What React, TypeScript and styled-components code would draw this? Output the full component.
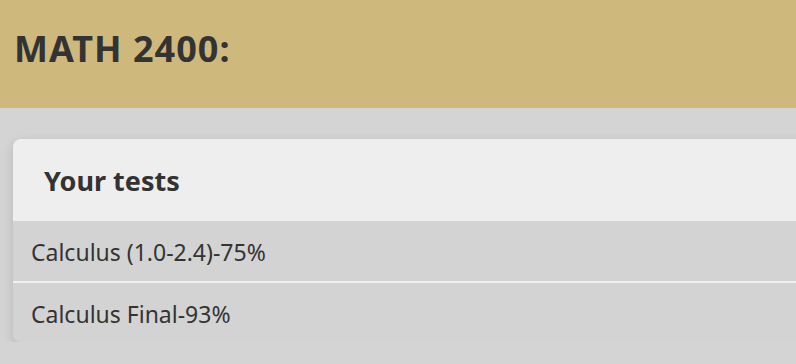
import React from "react"
import styled, { createGlobalStyle } from "styled-components"

const GlobalStyle = createGlobalStyle`
  html, body {
    margin: 0;
    padding: 0;
    background: #d4d4d4;
    overflow: hidden;
    font-family: "Noto Sans", "Open Sans", sans-serif;
    color: #333333;
  }
`

const tests = ["Calculus (1.0-2.4)-75%", "Calculus Final-93%"]

const App = () => {
  return (
    <>
      <GlobalStyle />
      <Header>
        <Title>MATH 2400:</Title>
      </Header>
      <Main>
        <Card>
          <CardHeading>Your tests</CardHeading>
          <TestList>
            {tests.map((t) => (
              <TestRow key={t}>{t}</TestRow>
            ))}
          </TestList>
        </Card>
      </Main>
    </>
  )
}

export default App

const Header = styled.header`
  height: 108px;
  background: #cfb87c;
  display: flex;
  align-items: center;
  padding: 0 14px 12px;
  box-sizing: border-box;
`

const Title = styled.h1`
  margin: 0;
  font-size: 36px;
  font-weight: 700;
  color: #333333;
  letter-spacing: 1px;
`

const Main = styled.main`
  padding: 31px 0 0 13px;
`

const Card = styled.section`
  width: 900px;
  border-radius: 8px;
  overflow: hidden;
  background: #d3d3d3;
  box-shadow: 0 4px 12px rgba(0, 0, 0, 0.14);
`

const CardHeading = styled.h2`
  margin: 0;
  height: 82px;
  display: flex;
  align-items: center;
  padding-left: 31px;
  background: #eeeeee;
  font-size: 27px;
  font-weight: 700;
  color: #333333;
`

const TestList = styled.ul`
  list-style: none;
  margin: 0;
  padding: 0;
`

const TestRow = styled.li`
  height: 60px;
  box-sizing: border-box;
  display: flex;
  align-items: center;
  padding: 2px 0 0 18px;
  font-size: 23px;
  color: #333333;
  background: #d3d3d3;

  & + & {
    border-top: 2px solid #f0f0f0;
    height: 61px;
  }
`
